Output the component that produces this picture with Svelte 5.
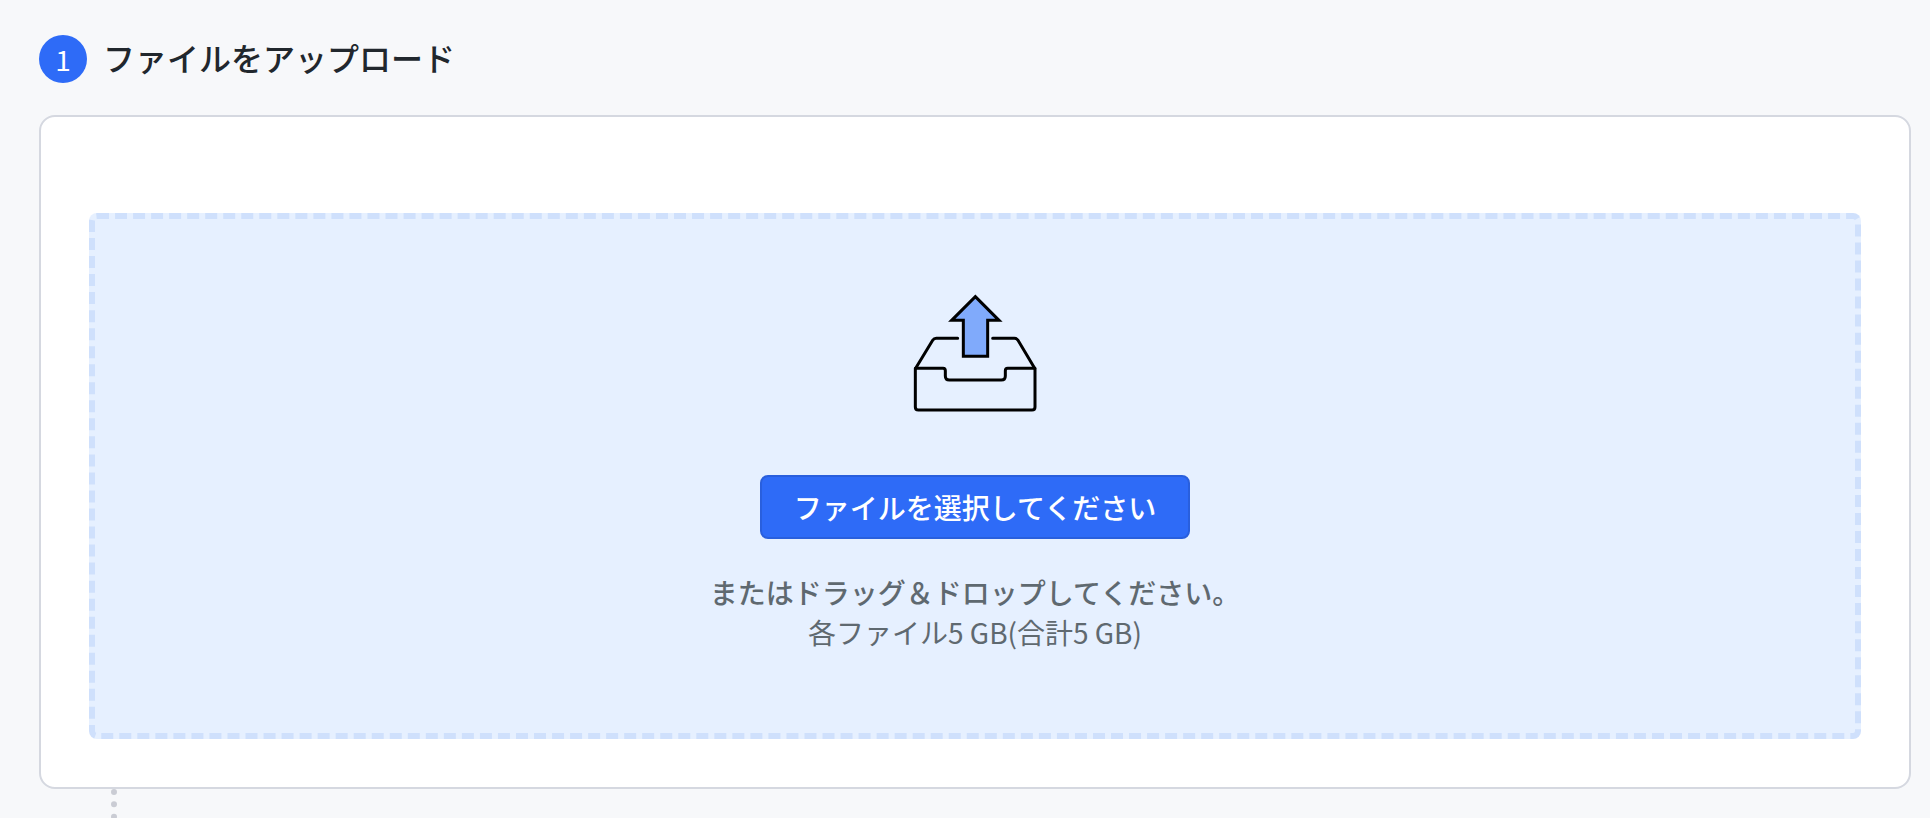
<script>
  let fileInput;
</script>

<main class="page">
  <header class="step">
    <span class="badge">1</span>
    <h1>ファイルをアップロード</h1>
  </header>

  <section class="card">
    <div class="dropzone">
      <svg class="tray" viewBox="66 36 378 366" fill="none" aria-hidden="true">
        <g stroke="#000" stroke-width="9" stroke-linecap="round" stroke-linejoin="round">
          <path d="M203 174.500H139Q132 174.500 128 181L77 265" />
          <path d="M308 174.500H373Q380 174.500 384 181L434 265" />
          <path d="M76 265H159Q166 265 166 272V288Q166 300 178 300H334Q346 300 346 288V272Q346 265 353 265H435V381Q435 390 426 390H85Q76 390 76 381Z" />
        </g>
        <path d="M256 50L327 121H293V229H220V121H185Z" fill="#80aafb" stroke="#000" stroke-width="9" />
      </svg>
      <button type="button" onclick={() => fileInput.click()}>ファイルを選択してください</button>
      <input bind:this={fileInput} type="file" multiple hidden />
      <p class="hint">またはドラッグ＆ドロップしてください。</p>
      <p class="limit">各ファイル5 GB(合計5 GB)</p>
    </div>
  </section>

  <div class="connector"></div>
</main>

<style>
  :global(body) {
    background: #f7f8fa;
  }

  .page {
    box-sizing: border-box;
    height: 100vh;
    overflow: hidden;
    padding: 35px 19px 0 39px;
    font-family: "Noto Sans CJK JP", "Noto Sans", sans-serif;
    font-size: 28px;
    line-height: 40px;
    color: #5f6970;
  }

  .step {
    display: flex;
    align-items: flex-start;
    gap: 16px;
    margin-bottom: 32px;
  }

  .badge {
    width: 48px;
    border-radius: 50%;
    background: #2e6bf7;
    color: #fff;
    line-height: 48px;
    text-align: center;
  }

  h1 {
    margin: 0;
    font-size: 32px;
    font-weight: 500;
    line-height: 44px;
    color: #21272d;
  }

  .card {
    padding: 96px 48px 48px;
    border: 2px solid #d5d8e0;
    border-radius: 16px;
    background: #fff;
  }

  .dropzone {
    display: flex;
    flex-direction: column;
    align-items: center;
    padding: 73px 32px 81px;
    border: 6px dashed #cfe0fc;
    border-radius: 8px;
    background: #e6f0ff;
  }

  .tray {
    width: 126px;
    height: 122px;
    margin-bottom: 61px;
  }

  button {
    margin: 0 0 33px;
    padding: 10px 32px;
    border: 2px solid #295fdd;
    border-radius: 8px;
    background: #2e6bf7;
    color: #fff;
    font: inherit;
    font-weight: 500;
    cursor: pointer;
  }

  p {
    margin: 0;
    text-align: center;
  }

  .hint {
    font-weight: 500;
  }

  .connector {
    width: 0;
    height: 80px;
    margin-left: 72px;
    border-left: 6px dotted #caccd4;
  }
</style>
